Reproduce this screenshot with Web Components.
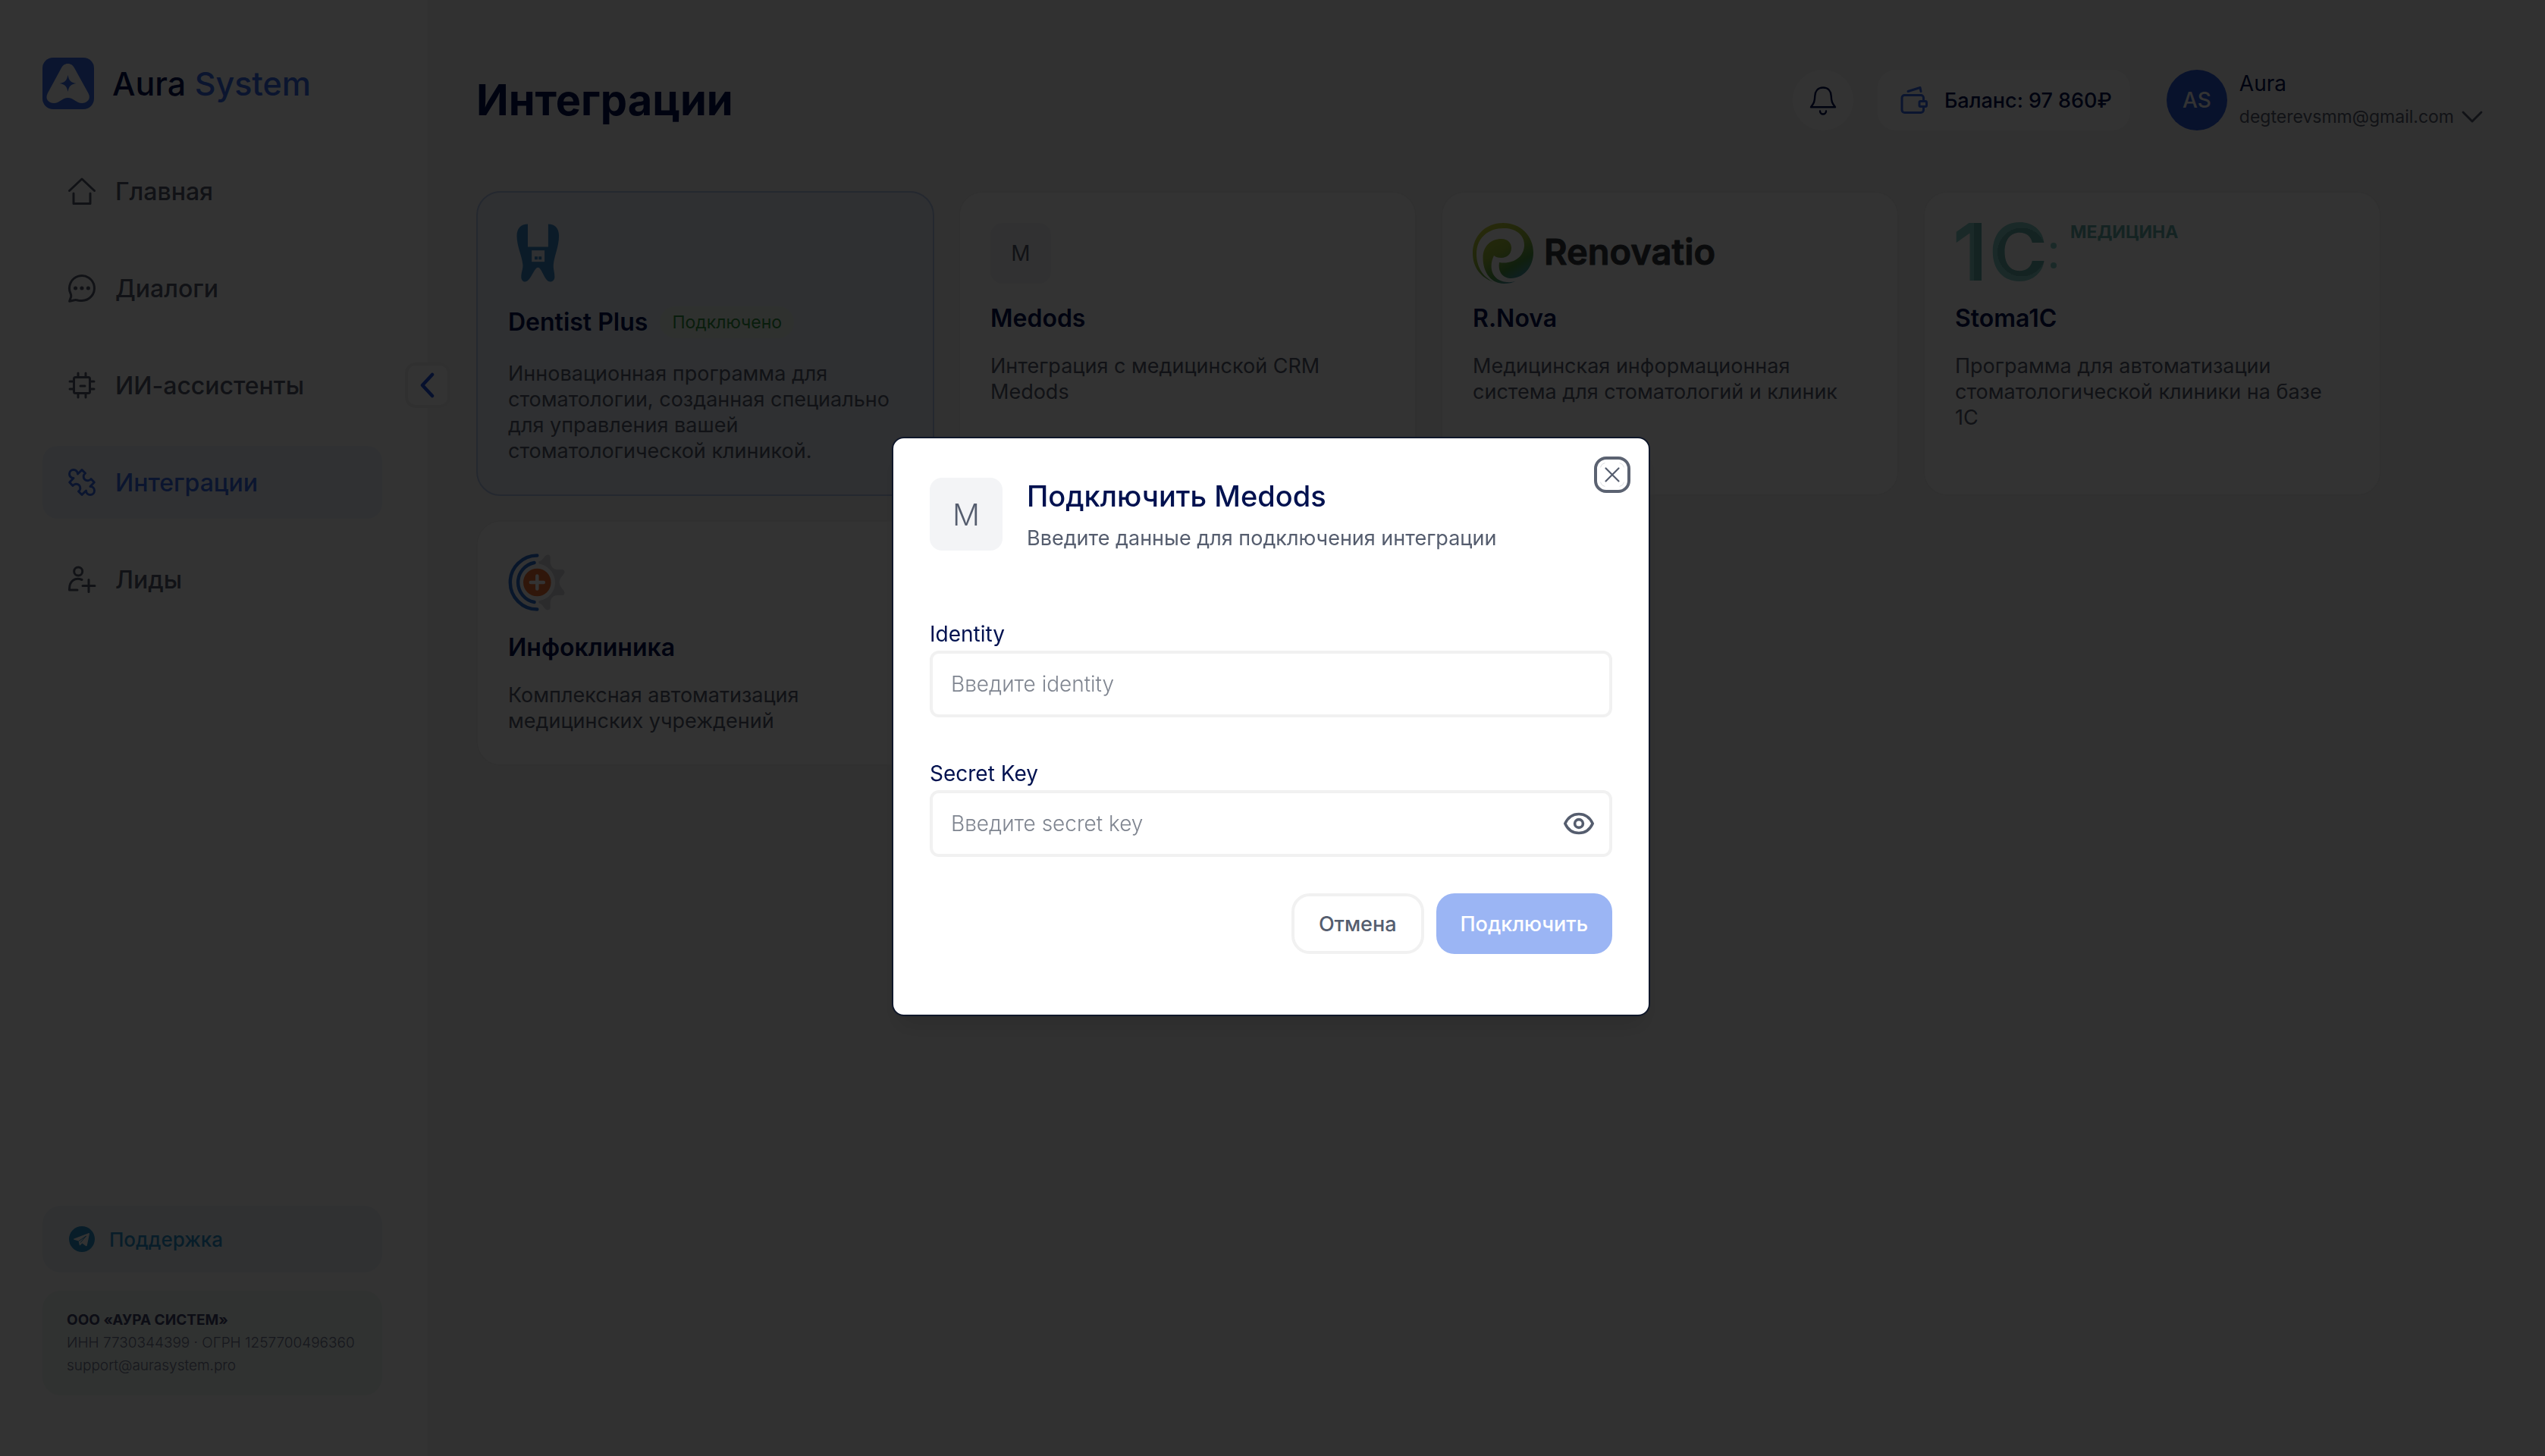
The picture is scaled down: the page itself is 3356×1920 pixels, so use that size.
<!DOCTYPE html>
<html lang="ru">
<head>
<meta charset="utf-8">
<meta name="viewport" content="width=device-width, initial-scale=1">
<title>Aura System</title>
<style>
  :root {
    --brand: #376be9;
    --navy: #00114f;
    --gray: #555d6e;
    --page: #f5f5f5;
    --line: #f1f1f1;
  }
  body {
    margin: 0;
    background: var(--page);
    color: var(--navy);
    font-family: Inter, "Open Sans", sans-serif;
    font-size: 28px;
  }
</style>
</head>
<body>

<aura-app>
  <aura-sidebar slot="sidebar">
    <nav-item icon="home">Главная</nav-item>
    <nav-item icon="chat">Диалоги</nav-item>
    <nav-item icon="chip">ИИ-ассистенты</nav-item>
    <nav-item icon="puzzle" active>Интеграции</nav-item>
    <nav-item icon="leads">Лиды</nav-item>
  </aura-sidebar>

  <aura-header slot="header" balance="97 860₽" user="Aura" email="degterevsmm@gmail.com" initials="AS">Интеграции</aura-header>

  <integration-card name="Dentist Plus" logo="dentist" connected>Инновационная программа для стоматологии, созданная специально для управления вашей стоматологической клиникой.</integration-card>
  <integration-card name="Medods">Интеграция с медицинской CRM Medods</integration-card>
  <integration-card name="R.Nova" logo="renovatio">Медицинская информационная система для стоматологий и клиник</integration-card>
  <integration-card name="Stoma1C" logo="stoma">Программа для автоматизации стоматологической клиники на базе 1С</integration-card>
  <integration-card name="Инфоклиника" logo="infoclinica">Комплексная автоматизация медицинских учреждений</integration-card>
</aura-app>

<connect-dialog letter="M">
  <span slot="title">Подключить Medods</span>
  <span slot="subtitle">Введите данные для подключения интеграции</span>
  <form-field label="Identity" placeholder="Введите identity"></form-field>
  <form-field label="Secret Key" placeholder="Введите secret key" secret></form-field>
</connect-dialog>

<script>
// stroke icons, all on a 40x40 grid
const ICONS = {
  home: '<path d="M3.5 19.5 20 4l16.500 15.500M9 23v13.500h22V23"/>',
  chat: '<path d="M20 36.500A16.500 16.500 0 1 0 4.900 26.700c.8 1.800 1.200 3 .8 4.600L3.600 37.300l6.800-1.600c2.200-.4 3.600.2 5.200.5 1.400.2 2.900.3 4.400.3Z"/><path d="M11.500 20h.1M19.900 20h.1M28.300 20h.1" stroke-width="5"/>',
  chip: '<rect x="9.500" y="9.500" width="21" height="21" rx="2"/><path d="M15 9V4M25 9V4M15 31v5M25 31v5M9 15H4M9 25H4M31 15h5M31 25h5M18 21h6"/>',
  puzzle: '<path d="M14.500 9A5.500 5.500 0 1 0 9 14.500L3.700 20l4.300 4.500A5.400 5.400 0 1 1 15.500 32L20 36.300 25.500 31A5.500 5.500 0 1 0 31 25.500L36.300 20 32 15.500A5.400 5.400 0 1 1 24.500 8L20 3.700Z"/>',
  leads: '<circle cx="15.200" cy="9.500" r="5.500"/><path d="M20 20.500C11 17 3.500 22 3.500 32.500V34H14M21 28.500h16M29 20.500v16"/>',
  bell: '<path d="M20 3.500c-7 0-10.500 5-10.700 11C9 22 8 24 4 29.300h32C32 24 31 22 30.700 14.500c-.2-6-3.700-11-10.700-11ZM16 34.500a4 4 0 0 0 8 0" stroke-width="2.400"/>',
  wallet: '<rect x="4" y="13.500" width="28.500" height="23" rx="3.500"/><rect x="27" y="21.500" width="9.500" height="7" rx="1.500" fill="#fff"/><path d="m12 8.500 16-5 1 5"/>',
  eye: '<path d="M1.800 20C5.500 12 12 7.500 20 7.500S34.500 12 38.200 20C34.500 28 28 32.500 20 32.500S5.500 28 1.800 20Z" stroke-width="3.600"/><circle cx="20" cy="20" r="5.400" stroke-width="3.600"/>',
  left: '<path d="M26 6 13 20l13 14" stroke-width="4.500"/>',
  down: '<path d="M5 12.500 20 27.500 35 12.500" stroke-width="3.600"/>',
  telegram: '<circle cx="20" cy="20" r="17" fill="currentColor" stroke="none"/><path d="M9.500 19.600 28.500 12.200c.9-.3 1.600.2 1.400 1.300l-3.100 14.800c-.2 1-.9 1.300-1.700.8l-4.700-3.500-2.500 2.300c-.6.500-1.100.3-1.200-.4l-1.100-5-5.900-1.800c-1-.3-1-.8-.2-1.100Z" fill="#fff" stroke="none"/><path d="m16 22.500 9.500-6.500-7.200 8.300" stroke-width="1"/>'
};

class AppIcon extends HTMLElement {
  connectedCallback() {
    this.attachShadow({ mode: 'open' }).innerHTML = `
      <style>
        :host { display: inline-flex; flex: none; width: 40px; height: 40px; }
        svg { width: 100%; height: 100%; }
      </style>
      <svg viewBox="0 0 40 40" fill="none" stroke="currentColor" stroke-width="3" stroke-linecap="round" stroke-linejoin="round" aria-hidden="true">${ICONS[this.getAttribute('name')]}</svg>
    `;
  }
}

class AuraLogo extends HTMLElement {
  connectedCallback() {
    this.attachShadow({ mode: 'open' }).innerHTML = `
      <style>
        :host { display: flex; align-items: center; gap: 24px; font-size: 43px; line-height: 56px; font-weight: 500; }
        svg { width: 68px; height: 68px; flex: none; }
        .accent { color: var(--brand); }
      </style>
      <svg viewBox="0 0 68 68" aria-hidden="true">
        <rect width="68" height="68" rx="14" fill="#376be9"/>
        <path d="M33.500 8c4.200 0 6.900 2.300 8.800 6L60.500 47c4 7.500-1.500 13-8.500 13-7.500 0-11-7-18.500-7S22.500 60 15 60C8 60 3 54.500 6.800 47L24.700 14c1.900-3.700 4.600-6 8.800-6Z" fill="#fff"/>
        <path d="M33.500 23c1.600 7.500 3.700 9.600 11 11-7.300 1.400-9.400 3.500-11 11-1.600-7.500-3.700-9.600-11-11 7.300-1.400 9.400-3.500 11-11Z" fill="#376be9"/>
      </svg>
      <span>Aura <span class="accent">System</span></span>
    `;
  }
}

class NavItem extends HTMLElement {
  connectedCallback() {
    this.attachShadow({ mode: 'open' }).innerHTML = `
      <style>
        :host { display: block; }
        a {
          display: flex;
          align-items: center;
          gap: 24px;
          height: 96px;
          padding: 0 32px;
          box-sizing: border-box;
          border-radius: 20px;
          color: var(--gray);
          font-size: 32px;
          font-weight: 500;
          text-decoration: none;
        }
        :host([active]) a { background: #eff5fd; color: var(--brand); }
      </style>
      <a href="#"><app-icon name="${this.getAttribute('icon')}"></app-icon><slot></slot></a>
    `;
  }
}

class AuraSidebar extends HTMLElement {
  connectedCallback() {
    this.attachShadow({ mode: 'open' }).innerHTML = `
      <style>
        :host {
          display: flex;
          flex-direction: column;
          position: relative;
          width: 564px;
          min-height: 100vh;
          padding: 76px 60px 80px 56px;
          box-sizing: border-box;
          background: #fff;
        }
        nav { display: flex; flex-direction: column; gap: 32px; margin-top: 60px; }
        .bottom { display: flex; flex-direction: column; gap: 24px; margin-top: auto; }
        .support {
          display: flex;
          align-items: center;
          gap: 16px;
          height: 88px;
          padding: 0 32px;
          border-radius: 24px;
          background: #f0f4fa;
          color: #2a93cb;
          font-size: 26px;
          font-weight: 500;
          text-decoration: none;
        }
        address {
          padding: 24px 32px;
          border-radius: 24px;
          background: #f0f7f3;
          color: #6f7590;
          font-size: 19px;
          font-weight: 300;
          line-height: 30px;
          font-style: normal;
          white-space: nowrap;
        }
        strong { display: block; color: #3c4068; font-weight: 700; }
        address a { color: inherit; text-decoration: none; }
        .collapse {
          position: absolute;
          top: 478px;
          right: -30px;
          display: grid;
          place-items: center;
          width: 60px;
          height: 60px;
          padding: 0;
          border: 4px solid var(--line);
          border-radius: 14px;
          background: #fff;
          color: #1f4fe0;
        }
      </style>
      <aura-logo></aura-logo>
      <nav><slot></slot></nav>
      <div class="bottom">
        <a class="support" href="#"><app-icon name="telegram"></app-icon>Поддержка</a>
        <address>
          <strong>ООО «АУРА СИСТЕМ»</strong>
          ИНН 7730344399 · ОГРН 1257700496360<br>
          <a href="mailto:support@aurasystem.pro">support@aurasystem.pro</a>
        </address>
      </div>
      <button class="collapse" type="button" aria-label="Свернуть меню"><app-icon name="left"></app-icon></button>
    `;
  }
}

class AuraHeader extends HTMLElement {
  connectedCallback() {
    this.attachShadow({ mode: 'open' }).innerHTML = `
      <style>
        :host { display: flex; align-items: center; justify-content: space-between; }
        h1 { margin: 0; font-size: 56px; line-height: 72px; font-weight: 700; }
        .tools { display: flex; align-items: center; }
        button { font: inherit; color: inherit; border: 0; padding: 0; }
        .bell { display: grid; place-items: center; width: 80px; height: 80px; border-radius: 50%; background: #fff; }
        .balance {
          display: flex;
          align-items: center;
          gap: 20px;
          height: 80px;
          margin-left: 32px;
          padding: 0 24px 0 28px;
          border-radius: 24px;
          background: #fff;
          font-size: 27px;
          font-weight: 500;
        }
        .balance app-icon { color: var(--brand); }
        .user { display: flex; align-items: center; gap: 16px; height: 80px; margin-left: 48px; background: none; text-align: left; }
        .avatar {
          display: grid;
          place-items: center;
          width: 80px;
          height: 80px;
          border-radius: 50%;
          background: #2b59dc;
          color: #fff;
          font-weight: 500;
        }
        .who { display: grid; line-height: 44px; }
        .mail { display: flex; align-items: center; gap: 8px; color: var(--gray); font-size: 23px; }
        .mail app-icon { width: 32px; height: 32px; }
      </style>
      <h1><slot></slot></h1>
      <div class="tools">
        <button class="bell" type="button" aria-label="Уведомления"><app-icon name="bell"></app-icon></button>
        <div class="balance"><app-icon name="wallet"></app-icon><span>Баланс: ${this.getAttribute('balance')}</span></div>
        <button class="user" type="button">
          <span class="avatar">${this.getAttribute('initials')}</span>
          <span class="who">
            <span>${this.getAttribute('user')}</span>
            <span class="mail">${this.getAttribute('email')}<app-icon name="down"></app-icon></span>
          </span>
        </button>
      </div>
    `;
  }
}

// partner logos, 80px high
const LOGOS = {
  dentist: `
    <svg width="80" height="80" viewBox="0 0 80 80">
      <path d="M26 1.400C17 1.400 11.500 7 11.500 17c0 14 6.500 25 7.900 38 .5 5-2.100 10-2.100 16 0 4 2 6.500 4.900 6.500 8 0 11.800-18.700 17.200-18.700s8.300 18.700 16.300 18.700c3.300 0 5.700-2.500 5.700-6.500 0-6-2.100-11-1.600-16 1.400-13 7.300-24 7.300-38 0-10-5.200-15.600-14.200-15.600v30.200H26Z" fill="#3b88c8"/>
      <path d="M31.200 36.200h16.900v15H31.200Z" fill="#ebf0f7"/>
      <path d="M35 44.200h4v4h-4ZM40.200 44.200h4v4h-4Z" fill="#3b88c8"/>
    </svg>`,
  renovatio: `
    <svg width="330" height="80" viewBox="0 0 330 80">
      <defs>
        <linearGradient id="leaf" x1="20" y1="5" x2="62" y2="76" gradientUnits="userSpaceOnUse">
          <stop offset="0" stop-color="#c3cf3a"/>
          <stop offset=".45" stop-color="#98bb3a"/>
          <stop offset=".75" stop-color="#4f9a45"/>
          <stop offset="1" stop-color="#4498bd"/>
        </linearGradient>
      </defs>
      <path d="M28 78C10 72 0 58 0 40 0 17 17 0 40 0s40 17 40 39c0 20-14 34-29 34-11 0-18-8-16-21 18 3 33-7 33-23C68 15 56 7 41 7 20 7 5 20 5 41c0 17 9 31 23 37Z" fill="url(#leaf)"/>
      <path d="M38 21c8 0 13 5 13 12 0 8-6 13-13 13-5 0-8-1-10-3-7 14-4 33 17 35 4 .4 8 0 12-1.500C53 79 47 80 41 80 25 80 13.500 66 13.500 46c0-15 10-25 24.500-25Z" fill="url(#leaf)"/>
      <text x="94" y="55" font-size="47" font-weight="600" fill="#36393f" stroke="#36393f" stroke-linejoin="round">Renovatio</text>
    </svg>`,
  stoma: `
    <svg width="310" height="80" viewBox="0 0 310 80">
      <defs>
        <linearGradient id="one" x1="0" y1="0" x2="34" y2="0" gradientUnits="userSpaceOnUse">
          <stop offset=".74" stop-color="#82cac5"/>
          <stop offset=".74" stop-color="#64aea8"/>
        </linearGradient>
        <radialGradient id="cee" cx="88" cy="38.500" r="40" gradientUnits="userSpaceOnUse">
          <stop offset=".8" stop-color="#64aea8"/>
          <stop offset=".8" stop-color="#82cac5"/>
        </radialGradient>
      </defs>
      <text y="76" font-size="104" font-weight="700"><tspan x="-3" fill="url(#one)">1</tspan><tspan x="45" fill="url(#cee)">С</tspan></text>
      <circle cx="130" cy="30" r="4" fill="#82cac5"/>
      <circle cx="130" cy="56" r="4" fill="#82cac5"/>
      <text x="152" y="20" font-size="23" font-weight="700" fill="#64aea8">МЕДИЦИНА</text>
    </svg>`,
  infoclinica: `
    <svg width="80" height="80" viewBox="0 0 80 80">
      <g fill="none" stroke="#2c6fd1" stroke-width="4.500" stroke-linecap="round">
        <path d="M38.300 4.500a35.500 35.500 0 0 0 0 71"/>
        <path d="M34.500 14a26.500 26.500 0 0 0 0 52"/>
      </g>
      <path d="M41 12c5 0 6-8 11.300-8.500 3.400 0 3.700 3 3.400 6-.4 7 1.300 11.500 7 13.200 4 1.200 9-1 11 1.300 3.500 5-5.200 7-6.200 16 1 9 9.700 11 6.200 16-2 2.300-7 .1-11 1.300-5.700 1.700-7.400 6.200-7 13.200.3 3 0 6-3.400 6C47 76 46 68 41 67.500c-1-1-1-2.500.2-3.300 12-2 20.800-12 20.800-24.200S53.200 17.800 41.200 15.500C40 14.500 40 13 41 12Z" fill="#d5d5dc"/>
      <circle cx="38.300" cy="40" r="18.300" fill="#ee7036"/>
      <path d="M38.300 31.500v17M29.800 40h17" stroke="#fff" stroke-width="4.500" stroke-linecap="round"/>
    </svg>`
};

class IntegrationCard extends HTMLElement {
  connectedCallback() {
    const name = this.getAttribute('name');
    const logo = LOGOS[this.getAttribute('logo')] || `<span class="letter">${name[0]}</span>`;
    const badge = this.hasAttribute('connected') ? '<span class="badge">Подключено</span>' : '';

    this.attachShadow({ mode: 'open' }).innerHTML = `
      <style>
        :host {
          display: flex;
          flex-direction: column;
          gap: 24px;
          padding: 40px;
          box-sizing: border-box;
          border: 2px solid var(--line);
          border-radius: 32px;
          background: #fff;
        }
        :host([connected]) { background: #ebf0f7; border-color: #b3c5ea; }
        .logo { height: 80px; }
        .logo svg { display: block; overflow: visible; }
        .letter {
          display: grid;
          place-items: center;
          width: 80px;
          height: 80px;
          border-radius: 16px;
          background: #f5f6f8;
          color: var(--gray);
        }
        .head { display: flex; align-items: center; gap: 16px; }
        h2 { margin: 0; font-size: 32px; line-height: 44px; font-weight: 600; }
        .badge {
          margin: 6px 0;
          padding: 0 16px;
          border-radius: 21px;
          background: #ebf6eb;
          color: #2f8f3f;
          font-size: 23px;
          line-height: 42px;
        }
        p { margin: 0; color: var(--gray); font-size: 27px; line-height: 34px; }
      </style>
      <div class="logo">${logo}</div>
      <div class="head"><h2>${name}</h2>${badge}</div>
      <p><slot></slot></p>
    `;
  }
}

class AuraApp extends HTMLElement {
  connectedCallback() {
    this.attachShadow({ mode: 'open' }).innerHTML = `
      <style>
        :host { display: grid; grid-template-columns: auto minmax(0, 1fr); min-height: 100vh; }
        main { padding: 92px 80px 64px 64px; }
        .grid {
          display: grid;
          grid-template-columns: repeat(4, minmax(0, 1fr));
          gap: 32px;
          max-width: 2512px;
          margin-top: 80px;
        }
      </style>
      <slot name="sidebar"></slot>
      <main>
        <slot name="header"></slot>
        <div class="grid"><slot></slot></div>
      </main>
    `;
  }
}

class FormField extends HTMLElement {
  connectedCallback() {
    const secret = this.hasAttribute('secret');
    const eye = secret ? '<button type="button" aria-label="Показать"><app-icon name="eye"></app-icon></button>' : '';

    this.attachShadow({ mode: 'open' }).innerHTML = `
      <style>
        :host { display: block; }
        label { display: block; line-height: 44px; }
        .box {
          display: flex;
          align-items: center;
          height: 88px;
          padding: 0 20px 0 24px;
          box-sizing: border-box;
          border: 4px solid var(--line);
          border-radius: 12px;
        }
        input {
          flex: 1;
          min-width: 0;
          padding: 0;
          border: 0;
          outline: 0;
          background: none;
          color: var(--navy);
          font: inherit;
          font-weight: 300;
        }
        input::placeholder { color: #7f8590; opacity: 1; }
        button { display: flex; padding: 0; border: 0; background: none; color: var(--gray); }
      </style>
      <label for="field">${this.getAttribute('label')}</label>
      <div class="box">
        <input id="field" type="${secret ? 'password' : 'text'}" placeholder="${this.getAttribute('placeholder')}">
        ${eye}
      </div>
    `;
  }
}

class ConnectDialog extends HTMLElement {
  connectedCallback() {
    this.attachShadow({ mode: 'open' }).innerHTML = `
      <style>
        :host {
          position: fixed;
          inset: 0;
          display: grid;
          place-items: center;
          padding: 0 4px 4px 0;
          background: rgba(0, 0, 0, .8);
        }
        .panel {
          position: relative;
          width: 1000px;
          max-width: 100%;
          padding: 48px 48px 80px;
          box-sizing: border-box;
          border: 2px solid #0f172a;
          border-radius: 16px;
          background: #fff;
          box-shadow: 0 20px 30px -6px rgba(0, 0, 0, .1), 0 8px 12px -8px rgba(0, 0, 0, .1);
        }
        header { display: flex; align-items: center; gap: 32px; }
        .letter {
          display: grid;
          place-items: center;
          width: 96px;
          height: 96px;
          border-radius: 16px;
          background: #f3f4f6;
          color: var(--gray);
          font-size: 40px;
          font-weight: 300;
        }
        h2 { margin: 0; font-size: 38px; line-height: 56px; font-weight: 500; }
        p { margin: 8px 0 0; line-height: 40px; color: var(--gray); font-size: 27px; }
        form { display: grid; gap: 52px; margin-top: 84px; }
        .actions { display: flex; justify-content: flex-end; gap: 16px; margin-top: 48px; }
        .actions button {
          height: 80px;
          padding: 0 32px;
          border: 0;
          border-radius: 24px;
          font: inherit;
          font-size: 27px;
          font-weight: 500;
        }
        .actions .cancel { border: 4px solid var(--line); background: #fff; color: var(--gray); }
        .actions .submit { background: #9bb5f4; color: #fff; }
        .close {
          position: absolute;
          top: 24px;
          right: 24px;
          width: 48px;
          height: 48px;
          padding: 0;
          border: 4px solid #5b6271;
          border-radius: 16px;
          background: none;
        }
        .close svg { display: block; }
      </style>
      <div class="panel" role="dialog" aria-modal="true" aria-labelledby="title">
        <header>
          <span class="letter">${this.getAttribute('letter')}</span>
          <div>
            <h2 id="title"><slot name="title"></slot></h2>
            <p><slot name="subtitle"></slot></p>
          </div>
        </header>
        <form id="connect"><slot></slot></form>
        <div class="actions">
          <button class="cancel" type="button">Отмена</button>
          <button class="submit" type="submit" form="connect" disabled>Подключить</button>
        </div>
        <button class="close" type="button" aria-label="Закрыть">
          <svg width="40" height="40" viewBox="0 0 40 40" fill="none" stroke-linecap="round">
            <path d="M11.500 11.500l17 17M28.500 11.500l-17 17" stroke="#555d6e" stroke-width="2.200"/>
            <path d="M4.500 10q1-4.500 5.500-5.500M30 4.500q4.500 1 5.500 5.500M35.500 30q-1 4.500-5.500 5.500M10 35.500q-4.500-1-5.500-5.500" stroke="#dcdee2"/>
          </svg>
        </button>
      </div>
    `;
  }
}

customElements.define('app-icon', AppIcon);
customElements.define('aura-logo', AuraLogo);
customElements.define('nav-item', NavItem);
customElements.define('aura-sidebar', AuraSidebar);
customElements.define('aura-header', AuraHeader);
customElements.define('integration-card', IntegrationCard);
customElements.define('aura-app', AuraApp);
customElements.define('form-field', FormField);
customElements.define('connect-dialog', ConnectDialog);
</script>
</body>
</html>
